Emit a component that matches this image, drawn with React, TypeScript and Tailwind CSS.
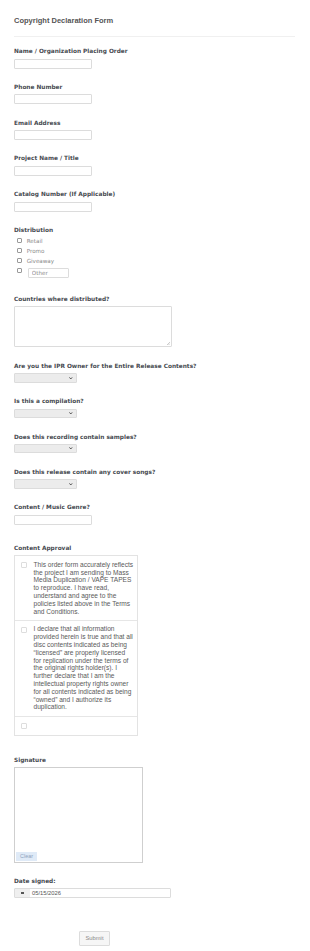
import React from 'react'

const label = "block font-['DejaVu_Sans',Verdana,sans-serif] font-bold text-[5.8px] leading-[8px] text-[#464a50] whitespace-nowrap"
const textInput = "block h-[10px] w-[77.5px] rounded-[1px] border border-[#dcdcdc] bg-white"

const approval1 = [
  'This order form accurately reflects',
  'the project I am sending to Mass',
  'Media Duplication / VAPE TAPES',
  'to reproduce. I have read,',
  'understand and agree to the',
  'policies listed above in the Terms',
  'and Conditions.',
]

const approval2 = [
  'I declare that all information',
  'provided herein is true and that all',
  'disc contents indicated as being',
  '\u201clicensed\u201d are properly licensed',
  'for replication under the terms of',
  'the original rights holder(s). I',
  'further declare that I am the',
  'intellectual property rights owner',
  'for all contents indicated as being',
  '\u201cowned\u201d and I authorize its',
  'duplication.',
]

function TextField({ title, className = '' }: { title: string; className?: string }) {
  return (
    <div className={className}>
      <label className={label}>{title}</label>
      <input type="text" className={`${textInput} mt-[3.5px]`} />
    </div>
  )
}

function SelectField({ title, className = '' }: { title: string; className?: string }) {
  return (
    <div className={className}>
      <label className={label}>{title}</label>
      <div className="relative mt-[3.3px] h-[9.4px] w-[62.7px]">
        <select className="block h-full w-full appearance-none rounded-[1px] border border-[#dcdcdc] bg-[#ececec]">
          <option></option>
        </select>
        {/* chevron */}
        <svg className="pointer-events-none absolute right-[4px] top-[3.4px] h-[2.6px] w-[3.6px]" viewBox="0 0 4 3" fill="none">
          <path d="M0.4 0.4L2 2.3L3.6 0.4" stroke="#333" strokeWidth="0.9" />
        </svg>
      </div>
    </div>
  )
}

function Option({ text }: { text: string }) {
  return (
    <div className="flex h-[10px] items-center pl-[3px]">
      <span className="h-[4.8px] w-[4.8px] rounded-[1px] border border-[#9a9a9a] bg-white" />
      <span className="ml-[4.9px] font-['DejaVu_Sans',Verdana,sans-serif] text-[5.6px] leading-[8px] text-[#8a8a8a]">{text}</span>
    </div>
  )
}

function ApprovalRow({ lines }: { lines: string[] }) {
  return (
    <div className="flex border-b border-[#e6e6e6] pl-[6px] pt-[4.5px] pb-[4.5px]">
      <span className="mt-[1.5px] h-[6px] w-[6px] shrink-0 rounded-[1px] border border-[#dddddd] bg-white" />
      <p className="ml-[6.5px] font-['Liberation_Sans',Arial,sans-serif] text-[6.6px] leading-[7.8px] text-[#5a5a5a]">
        {lines.map((l, i) => (
          <span key={i} className="block whitespace-nowrap">{l}</span>
        ))}
      </p>
    </div>
  )
}

export default function App() {
  return (
    <div className="min-h-screen bg-white px-[14px] pt-[16px]">
      <h1 className="font-['Liberation_Sans',Arial,sans-serif] text-[7.5px] font-bold leading-[9px] text-[#555]">
        Copyright Declaration Form
      </h1>
      <div className="mt-[11px] h-px w-[281px] bg-[#f0f0f0]" />

      <TextField title="Name / Organization Placing Order" className="mt-[10px]" />
      <TextField title="Phone Number" className="mt-[14.3px]" />
      <TextField title="Email Address" className="mt-[14.3px]" />
      <TextField title="Project Name / Title" className="mt-[14.3px]" />
      <TextField title="Catalog Number (If Applicable)" className="mt-[14.3px]" />

      {/* Distribution */}
      <div className="mt-[14.2px]">
        <label className={label}>Distribution</label>
        <div className="mt-[1.7px]">
          <Option text="Retail" />
          <Option text="Promo" />
          <Option text="Giveaway" />
          <div className="flex h-[12px] items-start pl-[3px]">
            <span className="mt-[2.5px] h-[4.8px] w-[4.8px] rounded-[1px] border border-[#9a9a9a] bg-white" />
            <input
              type="text"
              placeholder="Other"
              className="ml-[6px] mt-[2px] h-[10px] w-[41.7px] rounded-[1px] border border-[#dcdcdc] px-[3px] font-['DejaVu_Sans',Verdana,sans-serif] text-[5.6px] text-[#888] placeholder:text-[#8a8a8a]"
            />
          </div>
        </div>
      </div>

      {/* Countries */}
      <div className="mt-[17px]">
        <label className={label}>Countries where distributed?</label>
        <div className="relative mt-[3.5px] h-[40.7px] w-[157.7px]">
          <textarea className="block h-full w-full resize-none rounded-[1px] border border-[#dcdcdc] bg-white" />
          <svg className="pointer-events-none absolute bottom-[1.5px] right-[1.5px] h-[3px] w-[3px]" viewBox="0 0 3 3">
            <path d="M3 0L0 3M3 1.5L1.5 3" stroke="#999" strokeWidth="0.5" />
          </svg>
        </div>
      </div>

      <SelectField title="Are you the IPR Owner for the Entire Release Contents?" className="mt-[15.3px]" />
      <SelectField title="Is this a compilation?" className="mt-[14.6px]" />
      <SelectField title="Does this recording contain samples?" className="mt-[14.6px]" />
      <SelectField title="Does this release contain any cover songs?" className="mt-[14.6px]" />

      <TextField title="Content / Music Genre?" className="mt-[14.6px]" />

      {/* Content Approval */}
      <div className="mt-[19.6px]">
        <label className={label}>Content Approval</label>
        <div className="mt-[3px] w-[124.3px] border border-[#e3e3e3] bg-white">
          <ApprovalRow lines={approval1} />
          <ApprovalRow lines={approval2} />
          <div className="flex h-[18px] items-center pl-[6px]">
            <span className="h-[6px] w-[6px] rounded-[1px] border border-[#dddddd] bg-white" />
          </div>
        </div>
      </div>

      {/* Signature */}
      <div className="mt-[20.3px]">
        <label className={label}>Signature</label>
        <div className="mt-[3.3px] flex h-[95.4px] w-[129.3px] flex-col justify-end border border-[#cfcfcf] bg-white">
          <button className="mb-px ml-px h-[8.4px] w-[21px] bg-[#dfeaf7] font-['Liberation_Sans',Arial,sans-serif] text-[5.4px] leading-[8.4px] text-[#8ea3bd]">
            Clear
          </button>
        </div>
      </div>

      {/* Date signed */}
      <div className="mt-[14.6px]">
        <label className={label}>Date signed:</label>
        <div className="mt-[3px] flex h-[10px] w-[157.3px] items-stretch rounded-[1px] border border-[#dcdcdc] bg-white">
          <div className="flex w-[15.3px] items-center justify-center bg-[#efefef]">
            <span className="h-[2.6px] w-[2.8px] bg-[#555]" />
          </div>
          <span className="ml-[1.7px] flex items-center font-['Liberation_Sans',Arial,sans-serif] text-[5.8px] text-[#555]">
            05/15/2026
          </span>
        </div>
      </div>

      <div className="mt-[24px] pb-[15px] pl-[65px]">
        <button className="h-[14.7px] w-[31px] rounded-[1px] border border-[#dcdcdc] bg-[#f6f6f6] font-['Liberation_Sans',Arial,sans-serif] text-[5.8px] text-[#8a8a8a]">
          Submit
        </button>
      </div>
    </div>
  )
}
